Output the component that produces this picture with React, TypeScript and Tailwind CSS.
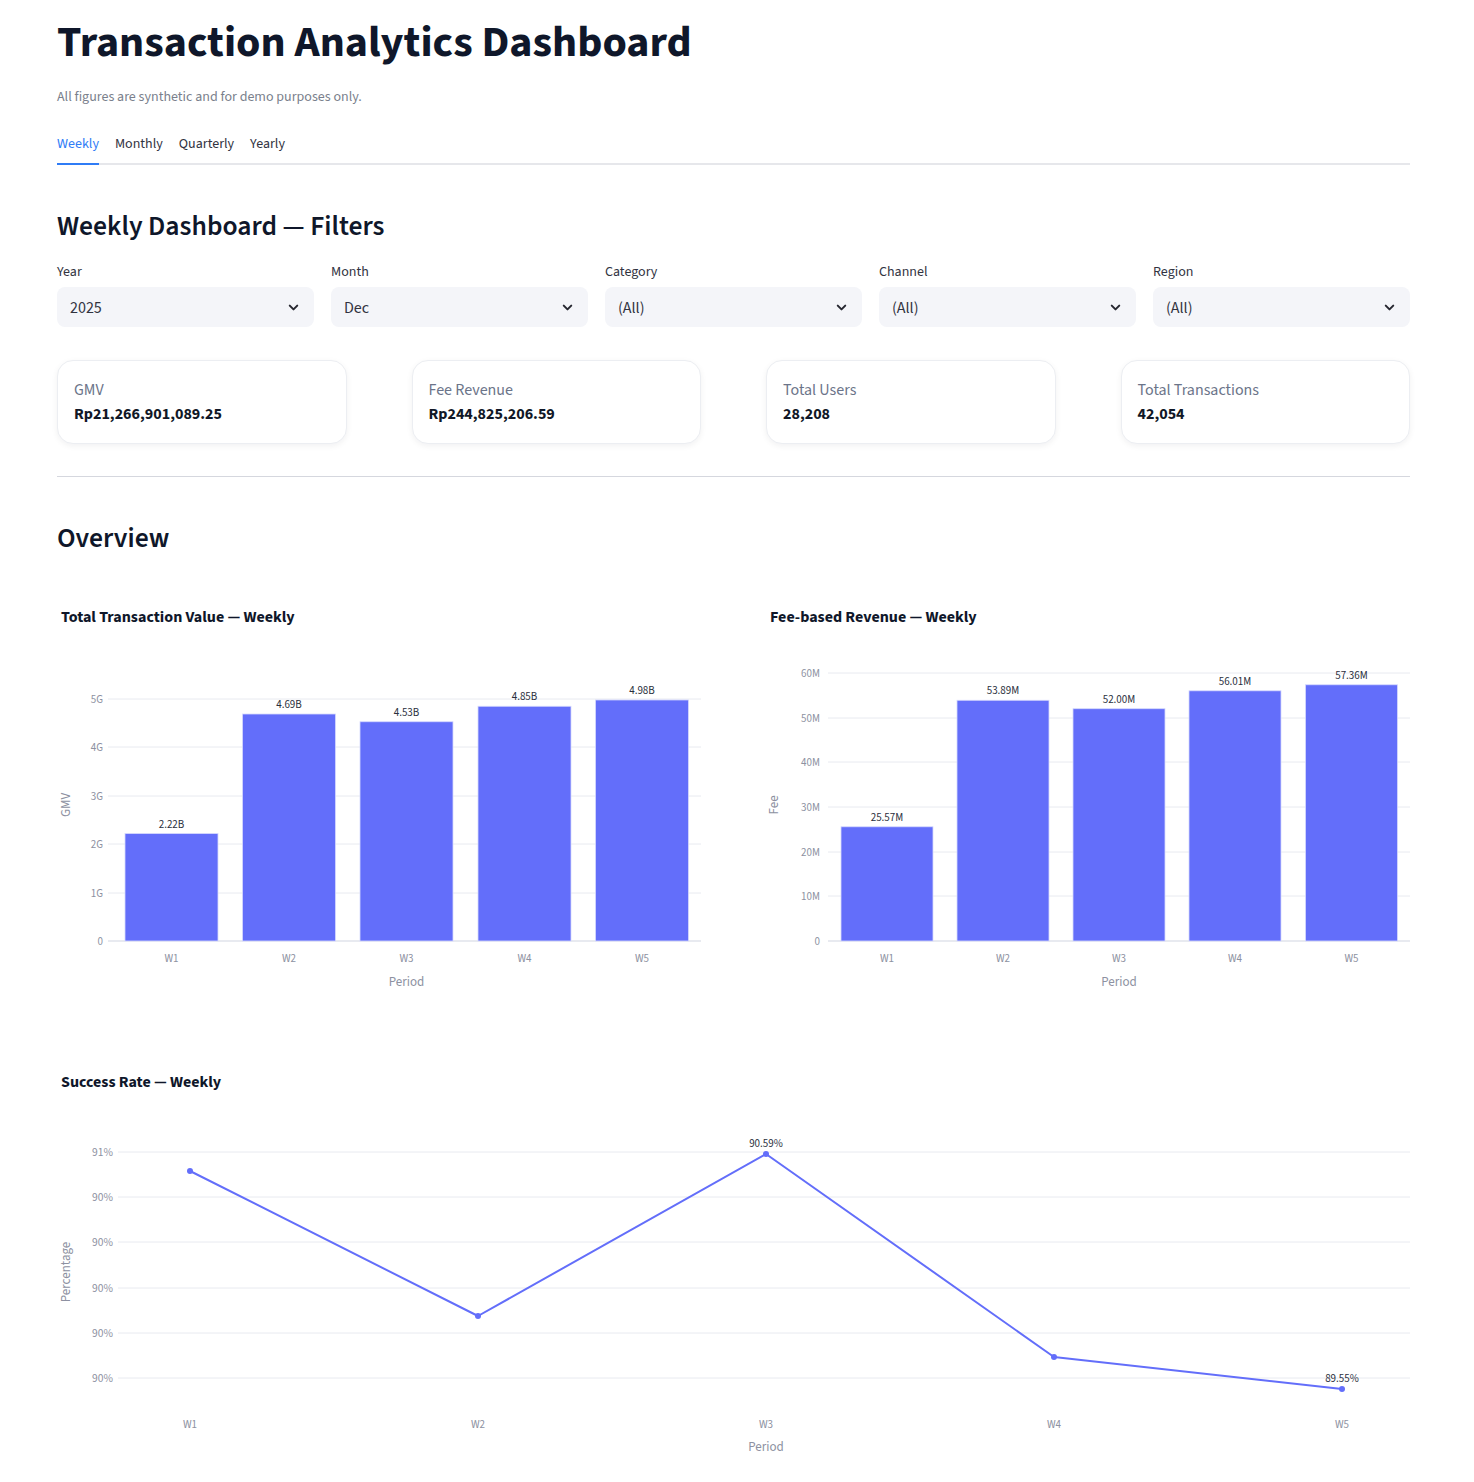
import React from "react";
import { ChevronDown } from "lucide-react";

const FONT = '"Source Sans Pro", "Source Sans 3", Lato, "Noto Sans", sans-serif';
const BAR = "#636efa";
const GRID = "#e8eaf0";
const TICK = "#8d91a1";

function Select({ label, value }: { label: string; value: string }) {
  return (
    <div className="flex flex-col">
      <div className="text-[14px] leading-[20px] text-[#31333f] mb-[5px]">{label}</div>
      <div className="h-[40px] rounded-[8px] bg-[#f4f5f9] flex items-center justify-between pl-[13px] pr-[13px]">
        <span className="text-[16px] text-[#31333f] pt-[1px]">{value}</span>
        <ChevronDown size={15} strokeWidth={3.2} color="#262730" />
      </div>
    </div>
  );
}

function Metric({ label, value }: { label: string; value: string }) {
  return (
    <div className="h-[84px] rounded-[16px] border border-[#eceef2] bg-white shadow-[0_2px_6px_rgba(15,23,42,0.06)] px-[16px] pt-[19px]">
      <div className="text-[16px] leading-[20px] text-[#6b7489]">{label}</div>
      <div className="text-[16px] leading-[20px] font-bold text-[#111827] mt-[4px]">{value}</div>
    </div>
  );
}

type BarChartProps = {
  grid: { y: number; label: string }[];
  gridX1: number;
  labelX: number;
  bars: { cx: number; v: number; text: string; name: string }[];
  barW: number;
  zeroY: number;
  scale: number;
  axisTitle: string;
  axisTitleX: number;
  periodX: number;
};

function BarChart(p: BarChartProps) {
  return (
    <svg width={644} height={365} style={{ fontFamily: FONT }} className="block">
      {p.grid.map((g, i) => (
        <g key={i}>
          <line x1={p.gridX1} x2={644} y1={g.y} y2={g.y} stroke={GRID} strokeWidth={g.label === "0" ? 2 : 1} />
          <text x={p.labelX} y={g.y + 4} textAnchor="end" fontSize={11} fill={TICK}>
            {g.label}
          </text>
        </g>
      ))}
      {p.bars.map((b, i) => {
        const top = p.zeroY - b.v * p.scale;
        return (
          <g key={i}>
            <rect x={b.cx - p.barW / 2} y={top} width={p.barW} height={p.zeroY - top} fill={BAR} stroke="#d6d9fd" strokeWidth={0.8} />
            <text x={b.cx} y={top - 6} textAnchor="middle" fontSize={11} fill="#2a2f3c">
              {b.text}
            </text>
            <text x={b.cx} y={326} textAnchor="middle" fontSize={11} fill={TICK}>
              {b.name}
            </text>
          </g>
        );
      })}
      <text x={p.periodX} y={350} textAnchor="middle" fontSize={13} fill={TICK}>
        Period
      </text>
      <text
        x={p.axisTitleX}
        y={169}
        textAnchor="middle"
        fontSize={13}
        fill={TICK}
        transform={`rotate(-90 ${p.axisTitleX} 169)`}
        dominantBaseline="middle"
      >
        {p.axisTitle}
      </text>
    </svg>
  );
}

function LineChart() {
  const grid = [52, 97, 142, 188, 233, 278];
  const labels = ["91%", "90%", "90%", "90%", "90%", "90%"];
  const pts = [
    { x: 133, y: 71, n: "W1" },
    { x: 421, y: 216, n: "W2" },
    { x: 709, y: 54, n: "W3" },
    { x: 997, y: 257, n: "W4" },
    { x: 1285, y: 289, n: "W5" },
  ];
  return (
    <svg width={1353} height={365} style={{ fontFamily: FONT }} className="block">
      {grid.map((y, i) => (
        <g key={i}>
          <line x1={61} x2={1353} y1={y} y2={y} stroke={GRID} strokeWidth={1} />
          <text x={56} y={y + 4} textAnchor="end" fontSize={11.5} fill={TICK}>
            {labels[i]}
          </text>
        </g>
      ))}
      <polyline
        points={pts.map((p) => `${p.x},${p.y}`).join(" ")}
        fill="none"
        stroke={BAR}
        strokeWidth={2}
        strokeLinejoin="round"
      />
      {pts.map((p, i) => (
        <g key={i}>
          <circle cx={p.x} cy={p.y} r={3} fill={BAR} />
          <text x={p.x} y={328} textAnchor="middle" fontSize={11} fill={TICK}>
            {p.n}
          </text>
        </g>
      ))}
      <text x={709} y={47} textAnchor="middle" fontSize={11} fill="#2a2f3c">
        90.59%
      </text>
      <text x={1285} y={282} textAnchor="middle" fontSize={11} fill="#2a2f3c">
        89.55%
      </text>
      <text x={709} y={351} textAnchor="middle" fontSize={13} fill={TICK}>
        Period
      </text>
      <text
        x={10}
        y={172}
        textAnchor="middle"
        fontSize={13}
        fill={TICK}
        transform="rotate(-90 10 172)"
        dominantBaseline="middle"
      >
        Percentage
      </text>
    </svg>
  );
}

export default function App() {
  const gmvGrid = [
    { y: 63, label: "5G" },
    { y: 111, label: "4G" },
    { y: 160, label: "3G" },
    { y: 208, label: "2G" },
    { y: 257, label: "1G" },
    { y: 305, label: "0" },
  ];
  const feeGrid = [
    { y: 37, label: "60M" },
    { y: 82, label: "50M" },
    { y: 126, label: "40M" },
    { y: 171, label: "30M" },
    { y: 216, label: "20M" },
    { y: 260, label: "10M" },
    { y: 305, label: "0" },
  ];
  return (
    <div className="bg-white min-h-[1482px] w-full" style={{ fontFamily: FONT }}>
      <div className="ml-[57px] w-[1353px] pt-[15px] pb-[20px]">
        <h1 className="text-[44px] leading-[56px] font-bold text-[#0f172a]">
          Transaction Analytics Dashboard
        </h1>
        <p className="text-[14px] leading-[20px] text-[#7a7f8c] mt-[16px]">
          All figures are synthetic and for demo purposes only.
        </p>

        <div className="mt-[27px] border-b-2 border-[#e6e7eb] flex gap-[16px] text-[14px] leading-[20px]">
          <div className="text-[#2f7cf6] pb-[9px] border-b-2 border-[#2f7cf6] -mb-[2px]">Weekly</div>
          <div className="text-[#31333f] pb-[9px]">Monthly</div>
          <div className="text-[#31333f] pb-[9px]">Quarterly</div>
          <div className="text-[#31333f] pb-[9px]">Yearly</div>
        </div>

        <h2 className="text-[27.6px] leading-[36px] font-semibold text-[#0f172a] mt-[44px]">
          Weekly Dashboard — Filters
        </h2>

        <div className="grid grid-cols-5 gap-[17px] mt-[17px]">
          <Select label="Year" value="2025" />
          <Select label="Month" value="Dec" />
          <Select label="Category" value="(All)" />
          <Select label="Channel" value="(All)" />
          <Select label="Region" value="(All)" />
        </div>

        <div className="grid grid-cols-4 gap-[65px] mt-[33px]">
          <Metric label="GMV" value="Rp21,266,901,089.25" />
          <Metric label="Fee Revenue" value="Rp244,825,206.59" />
          <Metric label="Total Users" value="28,208" />
          <Metric label="Total Transactions" value="42,054" />
        </div>

        <div className="h-px bg-[#d5d7de] mt-[32px]" />

        <h2 className="text-[27.6px] leading-[36px] font-semibold text-[#0f172a] mt-[44px]">Overview</h2>

        <div className="grid grid-cols-2 gap-[65px] mt-[50px]">
          <div>
            <div className="pl-[4px] text-[16px] leading-[20px] font-bold text-[#0f172a]">
              Total Transaction Value — Weekly
            </div>
            <div className="mt-[9px]">
              <BarChart
                grid={gmvGrid}
                gridX1={51}
                labelX={46}
                bars={[
                  { cx: 114.5, v: 2.22, text: "2.22B", name: "W1" },
                  { cx: 232, v: 4.69, text: "4.69B", name: "W2" },
                  { cx: 349.5, v: 4.53, text: "4.53B", name: "W3" },
                  { cx: 467.5, v: 4.85, text: "4.85B", name: "W4" },
                  { cx: 585, v: 4.98, text: "4.98B", name: "W5" },
                ]}
                barW={93}
                zeroY={305}
                scale={48.4}
                axisTitle="GMV"
                axisTitleX={10}
                periodX={349.5}
              />
            </div>
          </div>
          <div>
            <div className="pl-[4px] text-[16px] leading-[20px] font-bold text-[#0f172a]">
              Fee-based Revenue — Weekly
            </div>
            <div className="mt-[9px]">
              <BarChart
                grid={feeGrid}
                gridX1={62}
                labelX={54}
                bars={[
                  { cx: 121, v: 25.57, text: "25.57M", name: "W1" },
                  { cx: 237, v: 53.89, text: "53.89M", name: "W2" },
                  { cx: 353, v: 52.0, text: "52.00M", name: "W3" },
                  { cx: 469, v: 56.01, text: "56.01M", name: "W4" },
                  { cx: 585.5, v: 57.36, text: "57.36M", name: "W5" },
                ]}
                barW={92}
                zeroY={305}
                scale={4.467}
                axisTitle="Fee"
                axisTitleX={9}
                periodX={353}
              />
            </div>
          </div>
        </div>

        <div className="mt-[71px]">
          <div className="pl-[4px] text-[16px] leading-[20px] font-bold text-[#0f172a]">Success Rate — Weekly</div>
          <div className="mt-[8px]">
            <LineChart />
          </div>
        </div>
      </div>
    </div>
  );
}
